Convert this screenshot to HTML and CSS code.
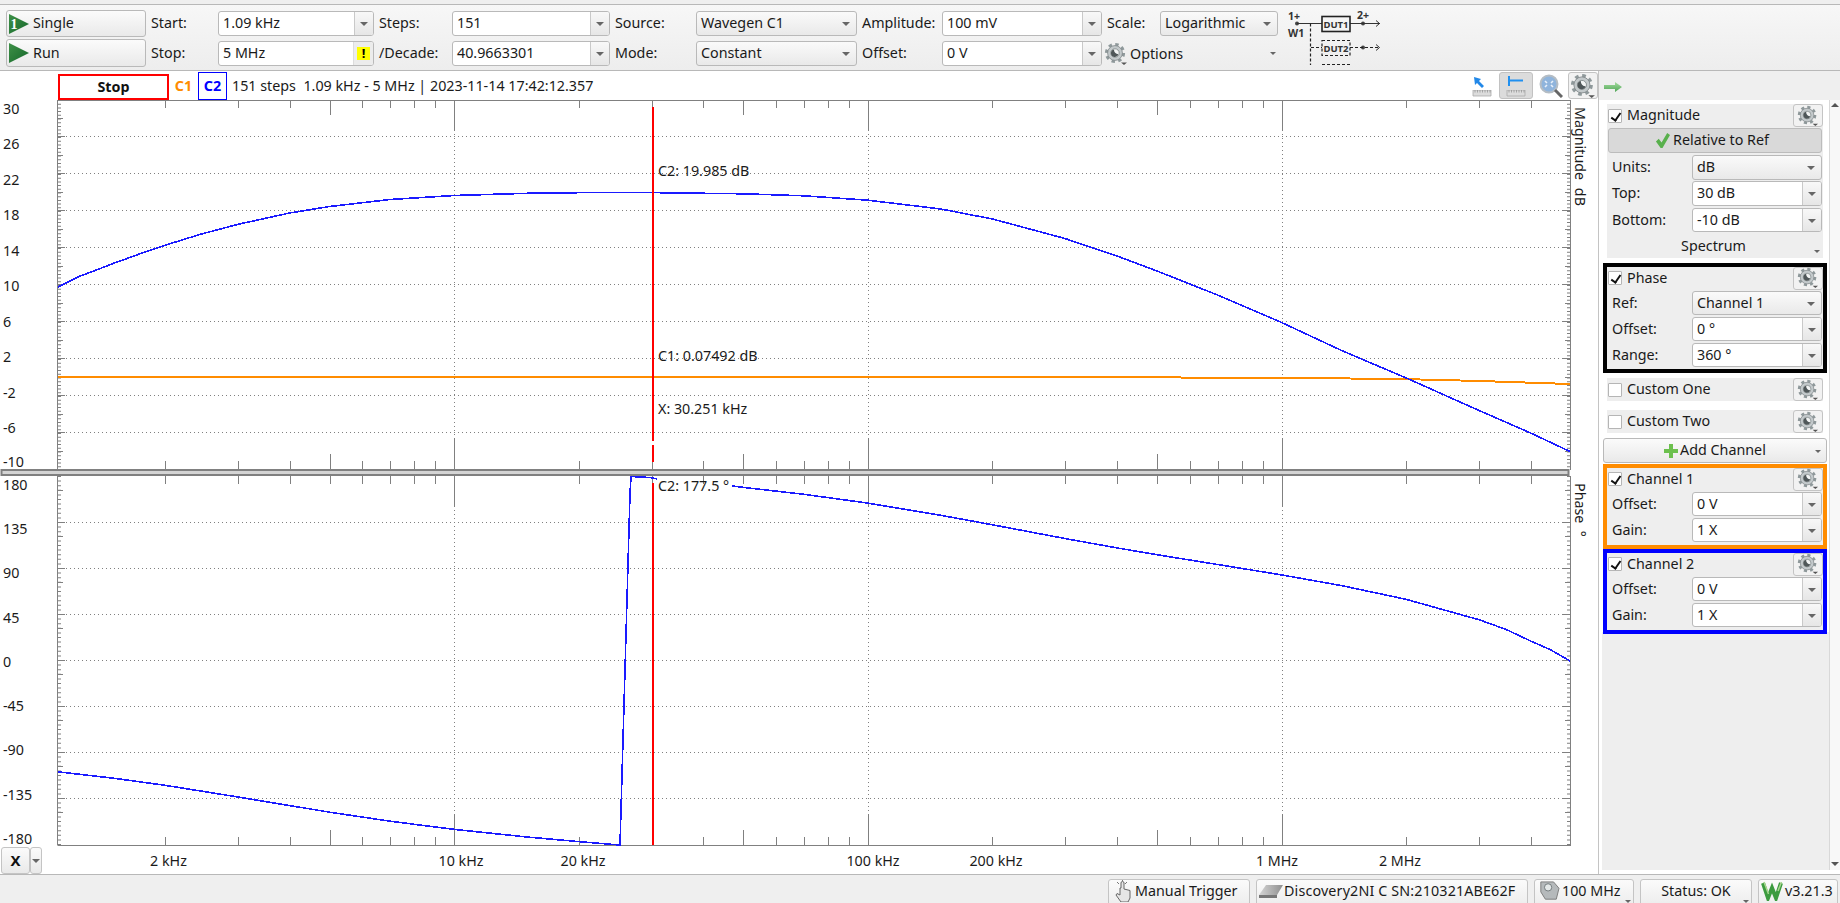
FILE: index.html
```html
<!DOCTYPE html>
<html lang="en">
<head>
<meta charset="utf-8">
<title>Network Analyzer</title>
<link rel="stylesheet" href="styles.css">
</head>
<body>
<svg class="defs" aria-hidden="true">
  <defs>
    <linearGradient id="playG" x1="0" y1="0" x2="1" y2="1"><stop offset="0" stop-color="#3f9148"/><stop offset="1" stop-color="#15672a"/></linearGradient>
    <linearGradient id="arrowG" x1="0" y1="0" x2="0" y2="1"><stop offset="0" stop-color="#a6dca0"/><stop offset="1" stop-color="#4fa656"/></linearGradient>
    <linearGradient id="diskG" x1="0" y1="0" x2="1" y2="0"><stop offset="0" stop-color="#d5d5d5"/><stop offset="1" stop-color="#8f8f8f"/></linearGradient>
    <symbol id="gear" viewBox="0 0 24 24">
      <circle cx="11" cy="11" r="8.6" fill="none" stroke="#8f999b" stroke-width="3" stroke-dasharray="3.4 3.35"/>
      <circle cx="11" cy="11" r="7.4" fill="#c3c9cb" stroke="#7f8789" stroke-width=".8"/>
      <circle cx="11" cy="11" r="4.2" fill="#f2f4f4" stroke="#70787a" stroke-width=".7"/>
      <path d="M10 7.4a3.8 3.8 0 1 0 4.4 4.8a4.4 4.4 0 0 1-4.4-4.8z" fill="#4f5759"/>
      <path d="M17 20.5h6l-3 2.5z" fill="#555"/>
    </symbol>
    <symbol id="ruler" viewBox="0 0 20 8">
      <path d="M1 0h18v6H1z" fill="#dcdcdc" stroke="#a9a9a9" stroke-width=".8"/>
      <path d="M3 0v2.5M5.500 0v2.500M8 0v2.500M10.500 0v2.500M13 0v2.500M15.500 0v2.500M18 0v2.500" stroke="#8c8c8c" stroke-width=".7"/>
    </symbol>
    <g id="t8"><path d="M165.500 0v8M238.500 0v8M290.500 0v8M362.500 0v8M390.500 0v8M414.500 0v8M435.500 0v8M579.500 0v8M652.500 0v8M703.500 0v8M776.500 0v8M804.500 0v8M828.500 0v8M849.500 0v8M992.500 0v8M1065.500 0v8M1117.500 0v8M1190.500 0v8M1218.500 0v8M1242.500 0v8M1263.500 0v8M1406.500 0v8M1479.500 0v8M1531.500 0v8"/></g>
    <g id="t10"><path d="M454.500 0v30M868.500 0v30M1282.500 0v30"/></g>
    <g id="t5"><path d="M330.500 0v15M743.500 0v15M1157.500 0v15"/></g>
    <g id="t5s"><path d="M330.500 0v8M743.500 0v8M1157.500 0v8"/></g>
    <g id="y1">
      <path class="dots3" d="M59.500 100V470"/>
      <path d="M58 118.500h5M58 155.500h5M58 192.500h5M58 229.500h5M58 266.500h5M58 303.500h5M58 340.500h5M58 377.500h5M58 414.500h5M58 451.500h5M58 136.500h7M58 173.500h7M58 210.500h7M58 247.500h7M58 284.500h7M58 321.500h7M58 358.500h7M58 395.500h7M58 432.500h7"/>
    </g>
    <g id="y2">
      <path class="dots4" d="M59.500 476V845"/>
      <path d="M58 490.500h5M58 536.500h5M58 582.500h5M58 628.500h5M58 674.500h5M58 720.500h5M58 766.500h5M58 812.500h5M58 522.500h7M58 568.500h7M58 614.500h7M58 660.500h7M58 706.500h7M58 752.500h7M58 798.500h7"/>
    </g>
  </defs>
</svg>

<header class="toolbar">
  <button class="btn run">
    <svg class="play" viewBox="0 0 20 20"><path d="M0 0l20 10L0 20z" fill="url(#playG)"/><text x="1.500" y="15" class="play-num">1</text></svg>
    <span>Single</span>
  </button>
  <label class="lbl">Start:</label>
  <div class="combo"><span class="val">1.09 kHz</span><span class="drop"></span></div>
  <label class="lbl">Steps:</label>
  <div class="combo"><span class="val">151</span><span class="drop"></span></div>
  <label class="lbl">Source:</label>
  <div class="combo sel"><span class="val">Wavegen C1</span><span class="drop"></span></div>
  <label class="lbl">Amplitude:</label>
  <div class="combo"><span class="val">100 mV</span><span class="drop"></span></div>
  <label class="lbl">Scale:</label>
  <div class="combo sel"><span class="val">Logarithmic</span><span class="drop"></span></div>
  <svg class="dut" viewBox="1285 5 100 64">
    <text class="dut-t" x="1288" y="21">1+</text>
    <text class="dut-t" x="1288" y="38">W1</text>
    <text class="dut-t" x="1357" y="20">2+</text>
    <circle cx="1297" cy="24.500" r="2" fill="#444"/>
    <circle cx="1363" cy="24.500" r="2" fill="#444"/>
    <circle cx="1363" cy="48.500" r="2" fill="#444"/>
    <path class="dut-l" d="M1297 24.500h25M1350 24.500h30M1376 21.500l3.500 3-3.500 3"/>
    <rect class="dut-b" x="1322" y="17.500" width="28" height="15"/>
    <text class="dut-n" x="1336" y="29">DUT1</text>
    <path class="dut-d" d="M1310.500 24.500V66M1311 48.500h11M1350 48.500h30M1322 65.500h28"/>
    <path class="dut-l" d="M1376 45.500l3.500 3-3.500 3"/>
    <rect class="dut-b dut-d" x="1322" y="41.500" width="28" height="15"/>
    <text class="dut-n" x="1336" y="53">DUT2</text>
  </svg>
  <button class="btn run">
    <svg class="play" viewBox="0 0 20 20"><path d="M0 0l20 10L0 20z" fill="url(#playG)"/></svg>
    <span>Run</span>
  </button>
  <label class="lbl">Stop:</label>
  <div class="combo"><span class="val">5 MHz</span><span class="warn"><b>!</b></span></div>
  <label class="lbl">/Decade:</label>
  <div class="combo"><span class="val">40.9663301</span><span class="drop"></span></div>
  <label class="lbl">Mode:</label>
  <div class="combo sel"><span class="val">Constant</span><span class="drop"></span></div>
  <label class="lbl">Offset:</label>
  <div class="combo"><span class="val">0 V</span><span class="drop"></span></div>
  <div class="options">
    <svg class="ico24"><use href="#gear"/></svg>
    <span>Options</span>
    <i class="mini"></i>
  </div>
</header>

<main class="main">
  <section class="scope">
    <div class="scope-head">
      <div class="stop">Stop</div>
      <div class="c1">C1</div>
      <div class="c2">C2</div>
      <div class="info">151 steps&nbsp; 1.09 kHz - 5 MHz | 2023-11-14 17:42:12.357</div>
      <div class="tools">
        <svg class="tool" viewBox="0 0 20 24"><path d="M2 3l7 2-2 2 5 5-2 2-5-5-2 2z" fill="#2288e8"/><use href="#ruler" x="0" y="16" width="20" height="8"/></svg>
        <div class="tool-on"><svg class="tool" viewBox="0 0 20 24"><path d="M3 2v10M3 6.500h14" stroke="#2090f0" stroke-width="2" fill="none"/><use href="#ruler" x="0" y="16" width="20" height="8"/></svg></div>
        <svg class="zoomi" viewBox="0 0 24 24"><circle cx="10" cy="10" r="8.500" fill="#8fb4dc" stroke="#b5bdc4" stroke-width="2"/><path d="M16 16l7 7" stroke="#666" stroke-width="3"/><path d="M6 7l2 2M14 7l-2 2M6 13l2-2M14 13l-2-2" stroke="#e8f0fa" stroke-width="1.600"/></svg>
        <button class="gearbtn big"><svg class="ico26"><use href="#gear"/></svg></button>
      </div>
    </div>
    <svg class="plot" viewBox="0 96 1598 778">
      <g class="axis">
        <rect class="sep" x="1.500" y="470" width="1567" height="5"/>
        <path d="M57.500 100V470M57.500 476V845.500M58 100.500H1570M58 845.500H1570M1570.500 100V470M1570.500 476V846"/>
        <use href="#t8" y="100"/><use href="#t5" y="100"/><use href="#t10" y="100"/>
        <use href="#t8" transform="translate(0,469) scale(1,-1)"/><use href="#t5" transform="translate(0,469) scale(1,-1)"/><use href="#t10" transform="translate(0,469) scale(1,-1)"/>
        <use href="#t8" y="476"/><use href="#t5s" y="476"/><use href="#t10" y="476"/>
        <use href="#t8" transform="translate(0,845) scale(1,-1)"/><use href="#t5" transform="translate(0,845) scale(1,-1)"/><use href="#t10" transform="translate(0,845) scale(1,-1)"/>
        <use href="#y1"/><use href="#y1" transform="translate(1628,0) scale(-1,1)"/>
        <use href="#y2"/><use href="#y2" transform="translate(1628,0) scale(-1,1)"/>
      </g>
      <path class="grid" d="M58 136.500H1570M58 173.500H1570M58 210.500H1570M58 247.500H1570M58 284.500H1570M58 321.500H1570M58 358.500H1570M58 395.500H1570M58 432.500H1570M58 522.500H1570M58 568.500H1570M58 614.500H1570M58 660.500H1570M58 706.500H1570M58 752.500H1570M58 798.500H1570M454.500 130V439M868.500 130V439M1282.500 130V439M454.500 506V815M868.500 506V815M1282.500 506V815"/>

      <polyline class="orange" points="58,377 1060,377 1300,378 1400,379 1480,381 1570,384"/>
      <polyline class="blue" points="58,287 80,276.100 100,268.600 113.400,263.400 140,253.800 165,245.300 200,234.400 238,224.300 289.600,213 329.700,206.500 390,199.500 454.200,195.500 527,193.300 578.700,192.700 651.600,192.600 743.400,193.800 803.800,195.800 867.900,200.200 940.800,209 992.500,219 1065.300,238.600 1117,256 1157,271 1217.500,295 1281.600,322.500 1342,350.700 1406,377.900 1478.900,410.400 1530.600,433 1570,451.500"/>
      <polyline class="blue" points="58,771.800 113.400,778.200 165,785.300 238,797 329.700,812.200 390,821.200 454.200,829.400 527,837 578.700,841.600 619.500,845 620,845 630,494 631,476.500 650,477.500 657,479"/>
      <polyline class="blue" points="732,486 743.400,487.400 803.800,494.300 867.900,503.100 940.800,515.300 992.500,524.800 1065.300,538.600 1117,547.900 1157,554.700 1217.500,564.500 1281.600,574.900 1342,585.700 1406,599.300 1478.900,619.700 1506,629.400 1530.600,641 1551,650 1570,661"/>
      <path class="red" d="M653 107V441M653 445V462M653 483V845"/>

      <text class="tx" x="658" y="176">C2: 19.985 dB</text>
      <text class="tx" x="658" y="361">C1: 0.07492 dB</text>
      <text class="tx" x="658" y="414">X: 30.251 kHz</text>
      <text class="tx" x="658" y="491">C2: 177.5 °</text>

      <text class="tx" x="3" y="114">30</text>
      <text class="tx" x="3" y="149">26</text>
      <text class="tx" x="3" y="185">22</text>
      <text class="tx" x="3" y="220">18</text>
      <text class="tx" x="3" y="256">14</text>
      <text class="tx" x="3" y="291">10</text>
      <text class="tx" x="3" y="327">6</text>
      <text class="tx" x="3" y="362">2</text>
      <text class="tx" x="3" y="398">-2</text>
      <text class="tx" x="3" y="433">-6</text>
      <text class="tx" x="3" y="467">-10</text>

      <text class="tx" x="3" y="490">180</text>
      <text class="tx" x="3" y="534">135</text>
      <text class="tx" x="3" y="578">90</text>
      <text class="tx" x="3" y="623">45</text>
      <text class="tx" x="3" y="667">0</text>
      <text class="tx" x="3" y="711">-45</text>
      <text class="tx" x="3" y="755">-90</text>
      <text class="tx" x="3" y="800">-135</text>
      <text class="tx" x="3" y="844">-180</text>

      <text class="tx mid" x="168.500" y="866">2 kHz</text>
      <text class="tx mid" x="461" y="866">10 kHz</text>
      <text class="tx mid" x="583" y="866">20 kHz</text>
      <text class="tx mid" x="873" y="866">100 kHz</text>
      <text class="tx mid" x="996" y="866">200 kHz</text>
      <text class="tx mid" x="1277" y="866">1 MHz</text>
      <text class="tx mid" x="1400" y="866">2 MHz</text>

      <text class="tx wide" transform="translate(1575,107) rotate(90)">Magnitude dB</text>
      <text class="tx" transform="translate(1575,483) rotate(90)">Phase  °</text>
    </svg>
    <div class="xbtn"><span class="xmain">X</span><span class="xdrop"></span></div>
  </section>

  <aside class="panel">
    <div class="panel-head">
      <svg class="garrow" viewBox="0 0 18 10"><path d="M0 3h11V0l7 5-7 5V7H0z" fill="url(#arrowG)"/></svg>
    </div>
    <div class="panel-body">
      <div class="panel-content">
        <div class="stack">
          <div class="sec mag">
            <div class="head"><span class="chk on"></span><span>Magnitude</span><button class="gearbtn"><svg class="ico20"><use href="#gear"/></svg></button></div>
            <button class="relbtn"><svg class="check" viewBox="0 0 16 16"><path d="M1 9l3-3 3 4 6-10 3 2-8 14h-2z" fill="#58b04c"/></svg><span>Relative to Ref</span></button>
            <div class="row r1"><span>Units:</span><div class="combo sel"><span class="val">dB</span><span class="drop"></span></div></div>
            <div class="row r1"><span>Top:</span><div class="combo"><span class="val">30 dB</span><span class="drop"></span></div></div>
            <div class="row r2"><span>Bottom:</span><div class="combo"><span class="val">-10 dB</span><span class="drop"></span></div></div>
            <div class="spectrum">Spectrum<i class="mini"></i></div>
          </div>

          <div class="box black">
            <div class="head"><span class="chk on"></span><span>Phase</span><button class="gearbtn"><svg class="ico20"><use href="#gear"/></svg></button></div>
            <div class="row r2"><span>Ref:</span><div class="combo sel"><span class="val">Channel 1</span><span class="drop"></span></div></div>
            <div class="row r2"><span>Offset:</span><div class="combo"><span class="val">0 °</span><span class="drop"></span></div></div>
            <div class="row r2"><span>Range:</span><div class="combo"><span class="val">360 °</span><span class="drop"></span></div></div>
          </div>

          <div class="sec custom one"><div class="head"><span class="chk"></span><span>Custom One</span><button class="gearbtn"><svg class="ico20"><use href="#gear"/></svg></button></div></div>
          <div class="sec custom two"><div class="head"><span class="chk"></span><span>Custom Two</span><button class="gearbtn"><svg class="ico20"><use href="#gear"/></svg></button></div></div>

          <button class="btn add"><svg class="plus" viewBox="0 0 14 14"><path d="M5 0h4v5h5v4H9v5H5V9H0V5h5z" fill="#6cc04e"/></svg><span>Add Channel</span><i class="mini"></i></button>

          <div class="box orange-b">
            <div class="head"><span class="chk on"></span><span>Channel 1</span><button class="gearbtn"><svg class="ico20"><use href="#gear"/></svg></button></div>
            <div class="row r2"><span>Offset:</span><div class="combo"><span class="val">0 V</span><span class="drop"></span></div></div>
            <div class="row r2"><span>Gain:</span><div class="combo"><span class="val">1 X</span><span class="drop"></span></div></div>
          </div>
          <div class="box blue-b">
            <div class="head"><span class="chk on"></span><span>Channel 2</span><button class="gearbtn"><svg class="ico20"><use href="#gear"/></svg></button></div>
            <div class="row r2"><span>Offset:</span><div class="combo"><span class="val">0 V</span><span class="drop"></span></div></div>
            <div class="row r2"><span>Gain:</span><div class="combo"><span class="val">1 X</span><span class="drop"></span></div></div>
          </div>
        </div>
      </div>
      <div class="scrollbar"><span class="sb-up"></span><span class="sb-down"></span></div>
    </div>
  </aside>
</main>

<footer class="status">
  <button class="sbtn s1"><svg class="hand" viewBox="0 0 18 22"><path d="M7 8V3a1.500 1.500 0 0 1 3 0v6l6 1.500V18l-2 4H7l-5-7 1-1.500L6 15V8z" fill="#e6e6e6" stroke="#666" stroke-width="1"/><path d="M3 2l2 2M13 2l-2 2M8.500 0v1" stroke="#777"/></svg><span>Manual Trigger</span></button>
  <button class="sbtn s2"><svg class="disk" viewBox="0 0 24 14"><path d="M7 1h17l-6 10H0z" fill="url(#diskG)"/><path d="M0 11h18v3H0z" fill="#777"/></svg><span>Discovery2NI C SN:210321ABE62F</span></button>
  <button class="sbtn s3"><svg class="chip" viewBox="0 0 24 22"><path d="M3 1h14l6 7-3 12H8L3 12z" fill="#b5b9bb" stroke="#777"/><circle cx="11" cy="7" r="4" fill="#e4e8e8" stroke="#6d7577"/></svg><span>100 MHz</span><i class="mini"></i></button>
  <button class="sbtn s4"><span>Status: OK</span><i class="mini"></i></button>
  <button class="sbtn s5"><svg class="wlogo" viewBox="0 0 22 20"><path d="M2 2l5 15 4-10 4 10 5-15" fill="none" stroke="#3c9b3f" stroke-width="4"/><path d="M3 1l4.500 12M20.500 1L17 10" fill="none" stroke="#a8d68f" stroke-width="1.500"/></svg><span>v3.21.3</span></button>
</footer>
</body>
</html>
```
FILE: styles.css
```css
* { box-sizing: border-box; }
html, body { margin: 0; padding: 0; }
body {
  width: 1840px;
  height: 903px;
  overflow: hidden;
  background: #efefef;
  color: #1a1a1a;
  font: 14.3px/1 "Noto Sans", sans-serif;
  display: flex;
  flex-direction: column;
}
button { font: inherit; color: inherit; padding: 0; }
label { display: block; }
.defs { position: absolute; width: 0; height: 0; }

/* toolbar */
.toolbar {
  margin-top: 4px;
  height: 67px;
  flex: none;
  border-top: 1px solid #b8b8b8;
  border-bottom: 1px solid #b8b8b8;
  background: linear-gradient(#f7f7f7, #ededed);
  padding: 5px 0 0 6px;
  display: grid;
  grid-template-columns: 140px 72px 156px 78px 158px 86px 161px 85px 160px 58px 118px 102px;
  grid-template-rows: 27px 28px;
  row-gap: 2px;
  align-items: center;
}
.lbl { padding-left: 5px; }
.btn {
  display: flex;
  align-items: center;
  border: 1px solid #b9b9b9;
  border-radius: 3px;
  background: linear-gradient(#fbfbfb, #e9e9e9);
}
.run { height: 100%; padding-left: 2px; gap: 4px; }
.play { width: 20px; height: 20px; flex: none; }
.play-num { font: bold 14px "Liberation Serif", serif; fill: #fff; }

.combo {
  height: 25px;
  display: flex;
  align-items: stretch;
  border: 1px solid #b9b9b9;
  border-radius: 3px;
  background: #fff;
  overflow: hidden;
}
.combo .val { flex: 1; align-self: center; padding-left: 4px; white-space: nowrap; }
.combo .drop {
  position: relative;
  width: 19px;
  flex: none;
  border-left: 1px solid #c9c9c9;
  background: linear-gradient(#f8f8f8, #e6e6e6);
}
.combo .drop::after, .mini, .xdrop::after {
  content: "";
  width: 0;
  height: 0;
  border: 4px solid transparent;
  border-top-color: #666;
  border-bottom-width: 0;
}
.combo .drop::after {
  position: absolute;
  left: 5px;
  top: 10px;
}
.combo.sel { background: linear-gradient(#fafafa, #e9e9e9); }
.combo.sel .drop { border-left: 0; background: none; }
.warn {
  width: 20px;
  flex: none;
  display: flex;
  align-items: center;
  justify-content: center;
  background: #ececec;
  border-left: 1px solid #ddd;
}
.warn b {
  width: 13px;
  height: 13px;
  background: #ffff00;
  color: #000;
  font-size: 13px;
  line-height: 13px;
  text-align: center;
}

.options { display: flex; align-items: center; grid-column: 10 / span 2; position: relative; height: 100%; gap: 2px; padding: 2px 0 0 2px; }
.options .mini { position: absolute; left: 168px; top: 13px; border-width: 3px 3px 0; }
.ico24 { width: 24px; height: 24px; display: block; }
.ico26 { width: 26px; height: 26px; display: block; }
.ico20 { width: 24px; height: 22px; display: block; }

.dut { grid-column: 12; grid-row: 1 / span 2; width: 100px; height: 64px; margin: -5px 0 0 7px; }
.dut-t { font: bold 10.500px "Noto Sans", sans-serif; fill: #333; }
.dut-n { font: bold 9.500px "Noto Sans", sans-serif; fill: #333; text-anchor: middle; }
.dut-l { fill: none; stroke: #333; stroke-width: 1; }
.dut-b { fill: none; stroke: #222; stroke-width: 1.600; }
.dut-d { fill: none; stroke: #222; stroke-width: 1.200; stroke-dasharray: 3 2; }

/* scope */
.main { flex: none; height: 803px; display: flex; background: #fff; }
.scope { position: relative; width: 1598px; flex: none; }
.scope-head { height: 29px; display: flex; align-items: flex-start; padding: 1px 0 0 58px; }
.stop {
  margin-top: 2px;
  width: 111px;
  height: 26px;
  border: 2px solid #f00;
  font-weight: 700;
  text-align: center;
  line-height: 22px;
  color: #111;
}
.c1 { width: 29px; height: 28px; line-height: 28px; text-align: center; color: #ff8c00; font-weight: 700; }
.c2 { width: 29px; height: 28px; line-height: 26px; text-align: center; color: #0000ff; font-weight: 700; border: 1px solid #0000ff; }
.info { margin-left: 5px; line-height: 28px; white-space: nowrap; }
.tools { margin-left: auto; display: flex; align-items: center; height: 27px; }
.tool { width: 20px; height: 24px; display: block; }
.tool-on {
  width: 34px;
  height: 27px;
  margin: 0 6px 0 7px;
  display: flex;
  align-items: center;
  justify-content: center;
  background: #dcdcdc;
  border: 1px solid #c2c2c2;
  border-radius: 3px;
}
.zoomi { width: 24px; height: 24px; margin-right: 5px; }
.gearbtn {
  width: 30px;
  height: 23px;
  border: 1px solid #c4c4c4;
  border-radius: 3px;
  background: #f2f2f2;
  display: flex;
  align-items: center;
  justify-content: center;
  flex: none;
}
.gearbtn.big { height: 27px; }

.plot { display: block; width: 1598px; height: 778px; margin-top: -4px; position: relative; pointer-events: none; }
.axis { stroke: #808080; stroke-width: 1; fill: none; }
.axis use { stroke: #808080; }
.sep { fill: #d4d4d4; stroke: #808080; stroke-width: 2; }
.dots3 { stroke-width: 3; stroke-dasharray: 1 2.700; }
.dots4 { stroke-width: 3; stroke-dasharray: 1 3.600; }
.grid { stroke: #808080; stroke-width: 1; fill: none; stroke-dasharray: 1 3; }
.blue { fill: none; stroke: #1a1aff; stroke-width: 1.600; shape-rendering: crispEdges; }
.orange { fill: none; stroke: #ff8c00; stroke-width: 2; shape-rendering: crispEdges; }
.red { fill: none; stroke: #f00; stroke-width: 2; }
.tx { font: 14.3px "Noto Sans", sans-serif; fill: #1a1a1a; white-space: pre; }
.tx.mid { text-anchor: middle; }
.tx.wide { word-spacing: 4px; }

.xbtn { position: absolute; left: 1px; top: 776px; width: 41px; height: 27px; display: flex; }
.xmain {
  width: 29px;
  border: 1px solid #c4c4c4;
  border-radius: 3px;
  background: linear-gradient(#fbfbfb, #e9e9e9);
  font-weight: 700;
  font-size: 15px;
  text-align: center;
  line-height: 24px;
  color: #111;
}
.xdrop {
  position: relative;
  width: 12px;
  border: 1px solid #c4c4c4;
  border-radius: 3px;
  background: linear-gradient(#fbfbfb, #e9e9e9);
}
.xdrop::after { position: absolute; left: 1px; top: 11px; }

/* side panel */
.panel { width: 242px; flex: none; border-left: 1px solid #c4c4c4; background: #fff; }
.panel-head { height: 29px; background: #efefef; display: flex; align-items: center; padding: 2px 0 0 5px; }
.garrow { width: 18px; height: 10px; }
.panel-body { height: 770px; margin-left: 3px; display: flex; }
.panel-content { width: 227px; background: #eee; flex: none; }
.stack { background: #fff; padding: 4px 2px 0 1px; height: 532px; }
.scrollbar { flex: 1; background: #f8f8f8; border-left: 1px solid #d8d8d8; position: relative; }
.sb-up, .sb-down { position: absolute; left: 1px; width: 0; height: 0; border: 4px solid transparent; }
.sb-up { top: 3px; border-bottom-color: #555; border-top-width: 0; }
.sb-down { bottom: 4px; border-top-color: #555; border-bottom-width: 0; }

.sec { background: #eee; margin: 0 4px; }
.head { display: flex; align-items: center; height: 23px; padding-left: 1px; }
.head .gearbtn { margin-left: auto; }
.chk {
  width: 14px;
  height: 14px;
  border: 1px solid #b5b5b5;
  border-radius: 1px;
  background: #fff;
  margin-right: 5px;
  flex: none;
  position: relative;
}
.chk.on::after {
  content: "";
  position: absolute;
  left: 3.500px;
  top: 1px;
  width: 4px;
  height: 8px;
  border: solid #111;
  border-width: 0 2px 2px 0;
  transform: rotate(35deg);
}
.relbtn {
  display: flex;
  align-items: center;
  justify-content: center;
  gap: 3px;
  width: 214px;
  height: 25px;
  margin: 1px 0 1px 1px;
  padding-right: 6px;
  border: 1px solid #bcbcbc;
  border-radius: 3px;
  background: #d9d9d9;
}
.check { width: 15px; height: 15px; }
.row { display: flex; align-items: center; padding: 0 1px 0 5px; height: 24px; }
.row.r1 { height: 26px; }
.row.r1 .combo { height: 25px; }
.row.r2 { margin-top: 2px; }
.row .combo { margin-left: auto; width: 130px; height: 24px; }
.spectrum { position: relative; height: 26px; text-align: center; line-height: 27px; padding-right: 3px; }
.spectrum .mini, .add .mini { position: absolute; border-width: 3px 3px 0; }
.spectrum .mini { right: 3px; top: 18px; }

.box { border: 4px solid #000; margin-top: 5px; background: #eee; }
.box .head { margin-bottom: 1px; height: 22px; }
.black { height: 110px; margin-bottom: 5px; }
.orange-b { border-color: #ff8c00; height: 85px; margin-top: 1px; }
.blue-b { border-color: #0000ff; height: 85px; margin-top: 0; }
.custom { height: 23px; }
.one { margin-bottom: 9px; }
.two { margin-bottom: 5px; }
.add {
  position: relative;
  width: 224px;
  height: 25px;
  justify-content: center;
  gap: 2px;
}
.add .mini { right: 5px; top: 11px; }
.plus { width: 14px; height: 14px; }

/* status */
.status {
  flex: none;
  height: 29px;
  border-top: 1px solid #b8b8b8;
  padding: 4px 0 0 1108px;
  display: flex;
  gap: 6px;
  overflow: hidden;
}
.sbtn {
  position: relative;
  height: 28px;
  display: flex;
  align-items: center;
  padding: 0 0 4px 5px;
  gap: 3px;
  border: 1px solid #c4c4c4;
  border-radius: 3px;
  background: linear-gradient(#fbfbfb, #ececec);
  white-space: nowrap;
}
.s1 { width: 142px; }
.s2 { width: 272px; padding-left: 2px; gap: 1px; letter-spacing: 0.15px; }
.s3 { width: 100px; padding-left: 2px; gap: 1px; }
.s4 { width: 112px; justify-content: center; padding-left: 0; }
.s5 { width: 80px; padding-left: 2px; gap: 2px; }
.sbtn .mini { position: absolute; right: 2px; top: 20px; border-width: 3px 3px 0; }
.hand { width: 18px; height: 22px; }
.disk { width: 24px; height: 14px; }
.chip { width: 24px; height: 20px; }
.wlogo { width: 22px; height: 20px; }
```
